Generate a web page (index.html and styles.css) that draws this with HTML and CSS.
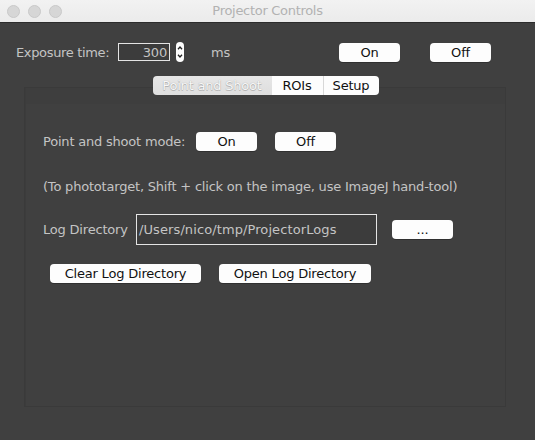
FILE: index.html
```html
<!DOCTYPE html>
<html>
<head>
<meta charset="utf-8">
<link rel="stylesheet" href="styles.css">
</head>
<body>
<div class="window">
  <div class="titlebar">
    <div class="lights">
      <span class="light"></span><span class="light"></span><span class="light"></span>
    </div>
    <div class="title">Projector Controls</div>
  </div>
  <div class="toprow">
    <span class="label exp-label">Exposure time:</span>
    <span class="field exp">300</span>
    <span class="spinner">
      <svg width="8" height="20" viewBox="0 0 8 20"><path d="M2 7.2 L4 5 L6 7.2" fill="none" stroke="#222" stroke-width="1.3"/><path d="M2 12.8 L4 15 L6 12.8" fill="none" stroke="#222" stroke-width="1.3"/></svg>
    </span>
    <span class="label ms">ms</span>
    <button class="btn top-on">On</button>
    <button class="btn top-off">Off</button>
  </div>
  <div class="tabpane">
    <div class="tabs">
      <span class="tab sel">Point and Shoot</span><span class="tab rois">ROIs</span><span class="tab setup">Setup</span>
    </div>
    <div class="panel">
      <div class="row r1">
        <span class="label pm-label">Point and shoot mode:</span>
        <button class="btn pm-on">On</button>
        <button class="btn pm-off">Off</button>
      </div>
      <div class="row r2">
        <span class="label">(To phototarget, Shift + click on the image, use ImageJ hand-tool)</span>
      </div>
      <div class="row r3">
        <span class="label dir-label">Log Directory</span>
        <span class="field dir">/Users/nico/tmp/ProjectorLogs</span>
        <button class="btn dots">...</button>
      </div>
      <div class="row r4">
        <button class="btn clear">Clear Log Directory</button>
        <button class="btn open">Open Log Directory</button>
      </div>
    </div>
  </div>
</div>
</body>
</html>
```

FILE: styles.css
```css
html, body {
  margin: 0;
  padding: 0;
  background: #404040;
}
body {
  width: 535px;
  height: 440px;
  overflow: hidden;
  font-family: "DejaVu Sans", "Liberation Sans", sans-serif;
  font-size: 13px;
  letter-spacing: -0.2px;
}
.window {
  width: 535px;
  height: 440px;
  background: #404040;
}
.titlebar {
  height: 22px;
  background: linear-gradient(#f2f2f2, #ebebeb);
  border-bottom: 1px solid #2c2c2c;
  display: flex;
  align-items: center;
  position: relative;
}
.lights {
  display: flex;
  gap: 8px;
  padding-left: 7px;
}
.light {
  width: 11px;
  height: 11px;
  border-radius: 50%;
  background: #d6d6d6;
  border: 0.5px solid #c9c9c9;
  display: block;
}
.title {
  position: absolute;
  left: 0;
  right: 0;
  top: 0;
  line-height: 22px;
  text-align: center;
  color: #b2b2b2;
  font-size: 13px;
  letter-spacing: -0.3px;
}
.label {
  color: #c4c4c4;
  white-space: nowrap;
}
.toprow {
  display: flex;
  align-items: center;
  height: 20px;
  margin-top: 19px;
  padding-left: 16px;
}
.exp-label {
  width: 93px;
  letter-spacing: -0.35px;
}
.field {
  box-sizing: border-box;
  border: 1px solid #e4e4e4;
  background: #3c3c3c;
  color: #c4c4c4;
  display: flex;
  align-items: center;
}
.exp {
  width: 52px;
  height: 18px;
  margin-left: 9px;
  justify-content: flex-end;
  padding-right: 2px;
}
.spinner {
  width: 8px;
  height: 20px;
  background: #fdfdfd;
  border-radius: 4px;
  margin-left: 6px;
  display: block;
}
.spinner svg {
  display: block;
}
.ms {
  width: 18px;
  margin-left: 27px;
}
.btn {
  font-family: inherit;
  font-size: 13px;
  letter-spacing: -0.2px;
  color: #111;
  background: #fdfdfd;
  border: none;
  border-radius: 4px;
  height: 19px;
  padding: 0;
  box-shadow: 0 1px 0 rgba(0,0,0,0.25);
  line-height: 19px;
  text-align: center;
}
.top-on {
  width: 61px;
  margin-left: 110px;
}
.top-off {
  width: 61px;
  margin-left: 30px;
}
.tabpane {
  margin: 14px 29px 0 24px;
}
.tabs {
  display: flex;
  justify-content: center;
  position: relative;
  z-index: 1;
  height: 19px;
  margin-left: 1px;
}
.tab {
  height: 19px;
  line-height: 19px;
  background: #fdfdfd;
  color: #111;
  text-align: center;
  display: block;
}
.tab.sel {
  width: 119px;
  background: linear-gradient(#e6e6e6, #dedede);
  color: #f7f7f7;
  text-shadow: 0 0 1px #9a9a9a, 0 1px 0 #b8b8b8;
  border-radius: 4px 0 0 4px;
}
.tab.rois {
  width: 51px;
  border-right: 1px solid #d8d8d8;
}
.tab.setup {
  width: 55px;
  border-radius: 0 4px 4px 0;
}
.panel {
  box-sizing: border-box;
  margin-top: -8px;
  height: 320px;
  border: 1px solid #3a3a3a;
  box-shadow: inset 1px 0 0 #3c3c3c, inset 0 16px 0 #3e3e3e;
  background: #404040;
  padding: 44px 0 0 18px;
}
.row {
  display: flex;
  align-items: center;
}
.r1 {
  height: 19px;
}
.pm-label {
  width: 141px;
}
.pm-on {
  width: 61px;
  margin-left: 12px;
}
.pm-off {
  width: 61px;
  margin-left: 18px;
}
.r2 {
  height: 16px;
  margin-top: 27px;
}
.r3 {
  height: 31px;
  margin-top: 20px;
}
.dir-label {
  width: 84px;
}
.dir {
  width: 241px;
  height: 31px;
  margin-left: 9px;
  padding-left: 2px;
  letter-spacing: 0.1px;
}
.dots {
  width: 61px;
  margin-left: 15px;
}
.r4 {
  height: 19px;
  margin-top: 19px;
  padding-left: 7px;
}
.clear {
  width: 151px;
}
.open {
  width: 152px;
  margin-left: 18px;
}
```
